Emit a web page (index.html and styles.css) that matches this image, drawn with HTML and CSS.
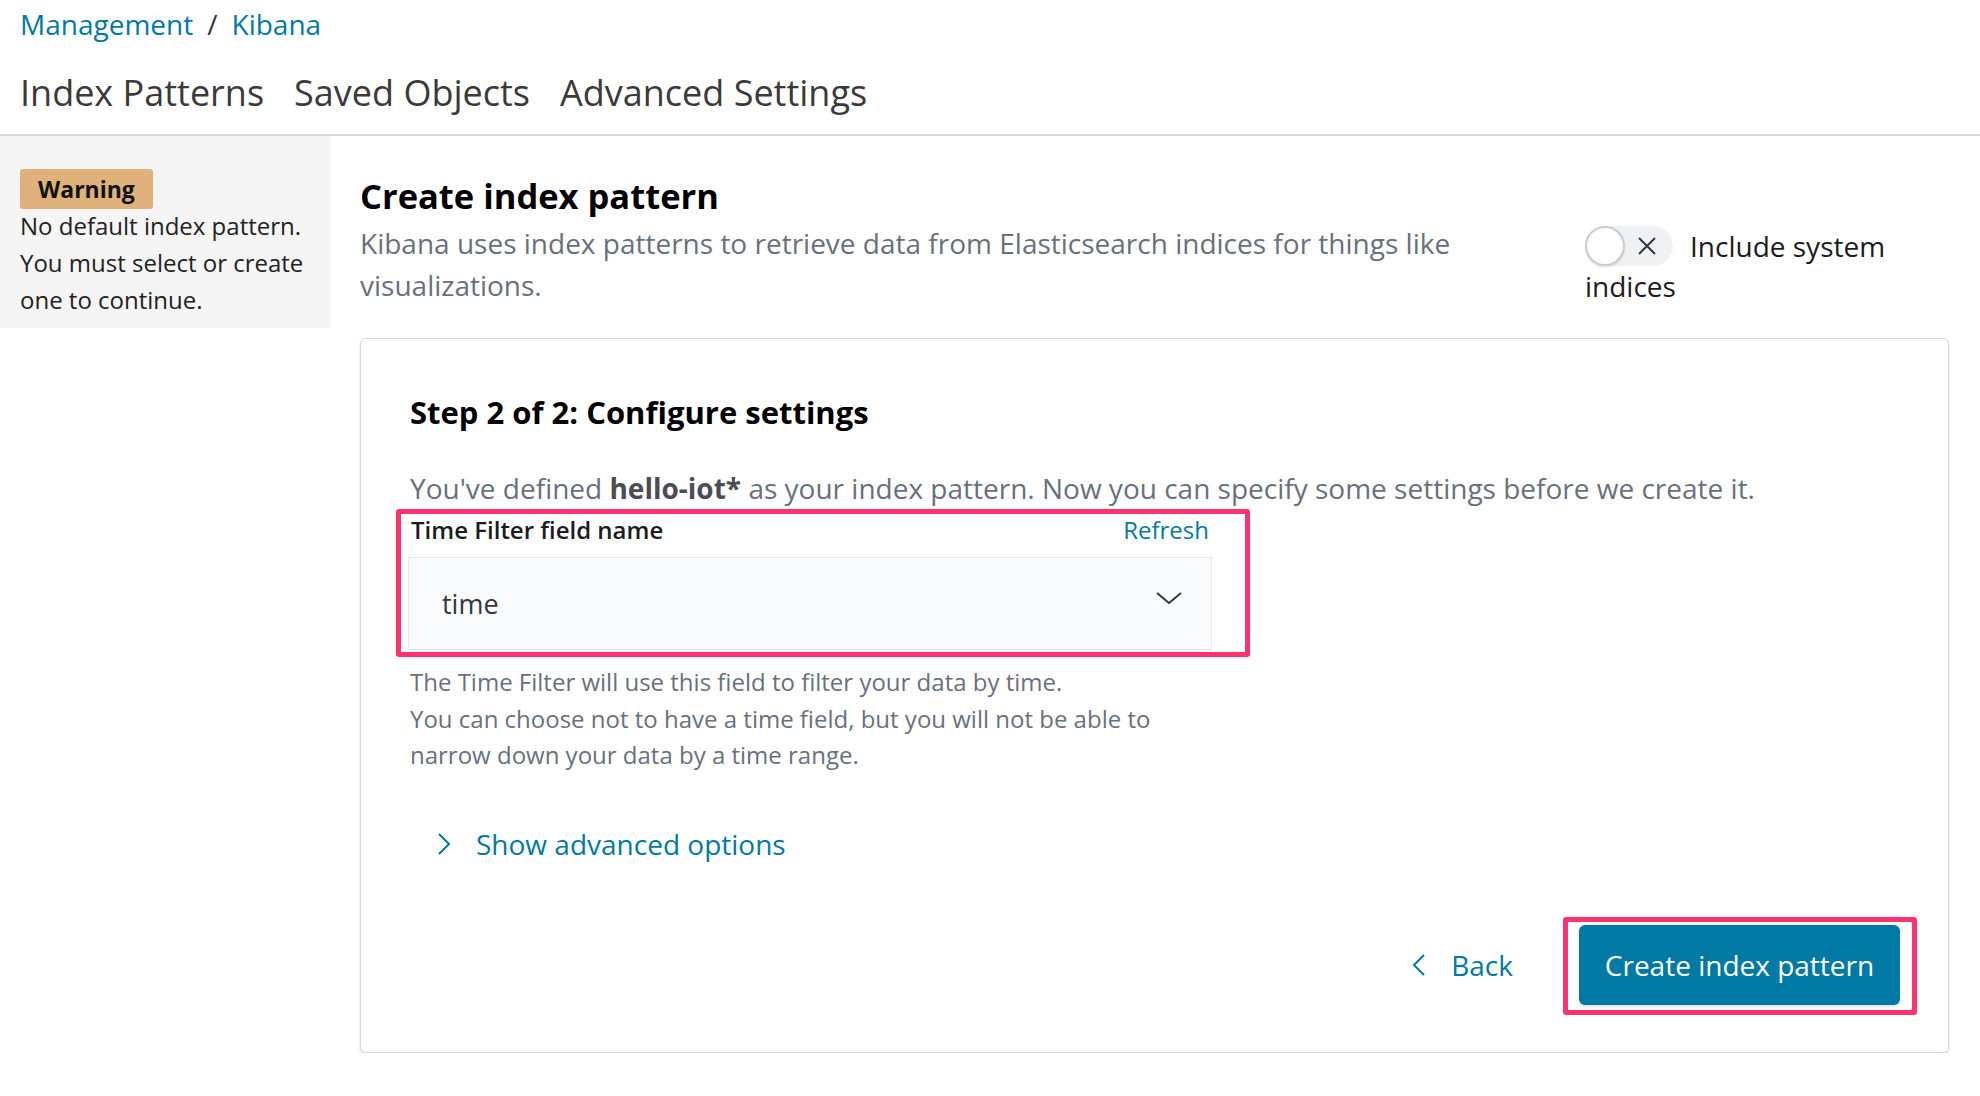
FILE: index.html
```html
<!DOCTYPE html>
<html>
<head>
<meta charset="utf-8">
<title>Kibana - Create index pattern</title>
<link rel="stylesheet" href="styles.css">
</head>
<body>
<header class="top">
  <nav class="crumbs">
    <a class="crumb" href="#">Management</a>
    <span class="crumb-sep">/</span>
    <a class="crumb" href="#">Kibana</a>
  </nav>
  <div class="tabs">
    <span class="tab">Index Patterns</span>
    <span class="tab">Saved Objects</span>
    <span class="tab">Advanced Settings</span>
  </div>
</header>
<div class="page">
  <aside class="sidebar">
    <span class="badge">Warning</span>
    <p class="side-text">No default index pattern. You must select or create one to continue.</p>
  </aside>
  <main class="main">
    <div class="head">
      <div class="head-left">
        <h1 class="title">Create index pattern</h1>
        <p class="desc">Kibana uses index patterns to retrieve data from Elasticsearch indices for things like visualizations.</p>
      </div>
      <div class="head-right">
        <span class="switch"><span class="knob"></span><svg class="switch-x" width="20" height="18" viewBox="0 0 20 18"><path d="M2 1 L18 17 M18 1 L2 17" stroke="#343741" stroke-width="2" fill="none"/></svg></span><span class="switch-label">Include system indices</span>
      </div>
    </div>
    <section class="panel">
      <h2 class="step">Step 2 of 2: Configure settings</h2>
      <p class="intro">You've defined <strong>hello-iot*</strong> as your index pattern. Now you can specify some settings before we create it.</p>
      <div class="formrow">
        <div class="label-row">
          <span class="label">Time Filter field name</span>
          <a class="refresh" href="#">Refresh</a>
        </div>
        <div class="select">
          <span class="select-value">time</span>
          <svg class="select-arrow" width="26" height="12" viewBox="0 0 26 12"><polyline points="1,1 13,11 25,1" stroke="#343741" stroke-width="2" fill="none"/></svg>
        </div>
        <div class="highlight highlight-row"></div>
      </div>
      <p class="help">The Time Filter will use this field to filter your data by time.<br>You can choose not to have a time field, but you will not be able to narrow down your data by a time range.</p>
      <a class="advanced" href="#"><svg class="chev" width="12" height="22" viewBox="0 0 12 22"><polyline points="1,1 11,11 1,21" stroke="#0079a5" stroke-width="2" fill="none"/></svg><span>Show advanced options</span></a>
      <div class="actions">
        <a class="back" href="#"><svg class="chev" width="13" height="22" viewBox="0 0 13 22"><polyline points="12,1 2,11 12,21" stroke="#0079a5" stroke-width="2" fill="none"/></svg><span>Back</span></a>
        <div class="btn-wrap">
          <button class="primary">Create index pattern</button>
          <div class="highlight highlight-btn"></div>
        </div>
      </div>
    </section>
  </main>
</div>
</body>
</html>
```
FILE: styles.css
```css
* { box-sizing: border-box; }
html, body { margin: 0; padding: 0; background: #fff; }
body { font-family: "Open Sans", "Liberation Sans", sans-serif; color: #343741; }
a { text-decoration: none; }

.top { padding: 6px 20px 17.5px; border-bottom: 2px solid #d9d9d9; }
.crumbs { font-size: 28px; line-height: 36px; display: flex; gap: 14px; }
.crumb { color: #0079a5; }
.crumb-sep { color: #343741; }
.tabs { display: flex; gap: 30px; margin-top: 26.5px; font-size: 36px; line-height: 48px; color: #3a3a3a; }

.page { display: flex; align-items: flex-start; }
.sidebar { width: 331px; flex: none; background: #f5f5f5; padding: 33px 18px 10px 20px; }
.badge { display: inline-block; background: #deb27a; color: #111; font-weight: 700; font-size: 23px; line-height: 40px; padding: 0 18px; border-radius: 3px; }
.side-text { margin: -2px 0 0; font-size: 24px; line-height: 37px; color: #222; }

.main { flex: 1; margin: 0 31px 0 29px; padding-top: 38px; }
.head { display: flex; align-items: flex-end; gap: 40px; }
.head-left { flex: 1; }
.title { margin: 0; font-size: 34.5px; line-height: 44px; font-weight: 700; color: #000; }
.desc { margin: 3.5px 0 0; font-size: 28px; line-height: 42px; color: #69707d; max-width: 1160px; }
.head-right { width: 330px; flex: none; font-size: 28px; line-height: 40px; color: #1a1c21; margin-bottom: 0; margin-right: 34px; }
.switch { display: inline-block; position: relative; width: 88px; height: 40px; border-radius: 20px; background: #f0f1f3; vertical-align: top; margin-right: 17px; }
.knob { position: absolute; left: 0; top: 0; width: 40px; height: 40px; border-radius: 50%; background: #fff; border: 2px solid #c9ccd1; box-shadow: 0 2px 2px rgba(0,0,0,0.08); }
.switch-x { position: absolute; left: 52px; top: 11px; }

.panel { margin-top: 32.5px; border: 1px solid #d3dae6; border-radius: 6px; background: #fff; box-shadow: 0 3px 3px -1px rgba(152,162,179,0.35), 0 1px 4px -1px rgba(152,162,179,0.25); padding: 53px 48px 47px 47px; height: 715px; }
.step { margin: 0; padding-left: 2px; font-size: 31px; line-height: 40px; font-weight: 700; color: #000; }
.intro { margin: 36px 0 0; padding-left: 2px; font-size: 28px; line-height: 40px; color: #69707d; }
.intro strong { color: #4a4d55; font-weight: 700; }

.formrow { position: relative; width: 804px; margin-top: 5.5px; }
.label-row { display: flex; justify-content: space-between; font-size: 24px; line-height: 32px; padding: 0 3px; }
.label { font-weight: 600; color: #1a1c21; }
.refresh { color: #0079a5; }
.select { margin-top: 11.5px; height: 93px; background: #fbfcfd; border: 1px solid #e6e8eb; border-bottom-color: #dfe1e4; display: flex; align-items: center; justify-content: space-between; padding: 0 29px 6px 33px; }
.select-value { font-size: 27px; color: #343741; padding-top: 6px; }
.select-arrow { margin-bottom: 6px; }
.highlight { position: absolute; border: 5px solid #fb3470; border-radius: 3px; pointer-events: none; }
.highlight-row { top: -5px; bottom: -7px; left: -12px; right: -38px; }

.help { width: 804px; margin: 14px 0 0; font-size: 24px; line-height: 36.5px; color: #69707d; padding-left: 2px; }
.advanced { display: flex; align-items: center; margin-top: 50px; padding-left: 30px; font-size: 28px; line-height: 40px; color: #0079a5; gap: 26px; }

.actions { display: flex; justify-content: flex-end; align-items: center; margin-top: 61px; gap: 66px; }
.back { display: flex; align-items: center; gap: 26px; color: #0079a5; font-size: 28px; line-height: 40px; }
.btn-wrap { position: relative; }
.primary { display: block; height: 80px; width: 321px; border: none; border-radius: 6px; background: #0079a5; color: #fff; font-family: "Open Sans", "Liberation Sans", sans-serif; font-size: 28px; padding: 0; box-shadow: 0 2px 3px rgba(0,0,0,0.12); }
.highlight-btn { top: -8px; bottom: -10px; left: -16px; right: -17px; }
```
